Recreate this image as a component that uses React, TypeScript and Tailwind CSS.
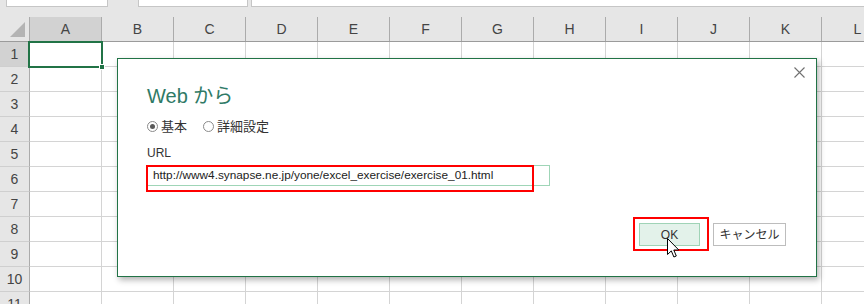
import React from 'react';

const COLS = ['A', 'B', 'C', 'D', 'E', 'F', 'G', 'H', 'I', 'J', 'K', 'L'];
const ROWS = [1, 2, 3, 4, 5, 6, 7, 8, 9, 10, 11];

function Radio({ checked, label }: { checked: boolean; label: string }) {
  return (
    <div className="flex items-center gap-[3px]">
      <span className="w-[11px] h-[11px] rounded-full border border-[#8a8a8a] bg-white flex items-center justify-center">
        {checked && <span className="w-[5px] h-[5px] rounded-full bg-[#5a5a5a]" />}
      </span>
      <span className="text-[13px] leading-none text-[#333]">{label}</span>
    </div>
  );
}

function Cursor() {
  return (
    <svg width="13" height="21" viewBox="0 0 13 21" className="absolute left-[667px] top-[238px]">
      <path
        d="M0.5 0.5 L0.5 16.5 L4.3 12.9 L6.9 19 L9.3 18 L6.8 12 L11.8 12 Z"
        fill="#fff"
        stroke="#000"
        strokeWidth="1"
        strokeLinejoin="miter"
      />
    </svg>
  );
}

function Dialog() {
  return (
    <div className="absolute left-[117px] top-[58px] w-[700px] h-[219px] bg-white border border-[#217346] shadow-[2px_3px_6px_rgba(0,0,0,0.3)]">
      <button className="absolute left-[675px] top-[7px] w-[12px] h-[12px] flex items-center justify-center">
        <svg width="11" height="11" viewBox="0 0 11 11">
          <path d="M0.5 0.5 L10.5 10.5 M10.5 0.5 L0.5 10.5" stroke="#707070" strokeWidth="1.1" />
        </svg>
      </button>

      <div className="pl-[29px] pt-[23px] flex flex-col">
        <h1 className="text-[20px] leading-[28px] text-[#2f7a66]">Web から</h1>

        <div className="mt-[10px] flex items-center gap-[16px]">
          <Radio checked label="基本" />
          <Radio checked={false} label="詳細設定" />
        </div>

        <div className="mt-[13px] text-[12px] leading-[14px] text-[#333]">URL</div>

        <div className="mt-[5px] w-[403px] h-[21px] border border-[#9fd5b7] flex items-center pl-[5px]">
          <span className="text-[11.8px] text-[#222] whitespace-nowrap">
            http://www4.synapse.ne.jp/yone/excel_exercise/exercise_01.html
          </span>
        </div>
      </div>

      <div className="absolute left-[28px] top-[106px] w-[388px] h-[27px] border-2 border-[#ff0000]" />

      <div className="absolute right-[30px] bottom-[30px] flex gap-[13px]">
        <button className="w-[61px] h-[23px] bg-[#e3f2ea] border border-[#9fd3b6] text-[12px] text-[#333] flex items-center justify-center">
          OK
        </button>
        <button className="w-[73px] h-[23px] bg-white border border-[#bdbdbd] text-[12px] text-[#333] flex items-center justify-center">
          キャンセル
        </button>
      </div>

      <div className="absolute left-[515px] top-[158px] w-[76px] h-[34px] border-2 border-[#ff0000]" />
    </div>
  );
}

export default function App() {
  return (
    <div
      className="relative w-[864px] h-[304px] overflow-hidden bg-white"
      style={{ fontFamily: '"Liberation Sans", "Noto Sans CJK JP", sans-serif' }}
    >
      {/* formula bar strip */}
      <div className="h-[17px] bg-[#e6e6e6] flex items-start">
        <div className="ml-[6px] w-[102px] h-[7px] bg-white border-x border-b border-[#c6c6c6]" />
        <div className="ml-[30px] w-[110px] h-[7px] bg-white border-x border-b border-[#c6c6c6]" />
        <div className="ml-[3px] flex-1 h-[7px] bg-white border-l border-b border-[#c6c6c6]" />
      </div>

      {/* column headers */}
      <div className="flex h-[25px] bg-[#e6e6e6] border-b border-[#9b9b9b]">
        <div className="w-[30px] shrink-0 border-r border-[#ababab] relative">
          <svg width="15" height="15" viewBox="0 0 15 15" className="absolute left-[10px] top-[5px]">
            <path d="M15 0 L15 15 L0 15 Z" fill="#b4b4b4" />
          </svg>
        </div>
        {COLS.map((c, i) => (
          <div
            key={c}
            className={
              (i === 0 ? 'w-[72px] bg-[#d2d2d2] ' : 'w-[72px] ') +
              'shrink-0 border-r border-[#ababab] flex items-center justify-center text-[14px] text-[#444]'
            }
          >
            {c}
          </div>
        ))}
      </div>

      {/* rows */}
      {ROWS.map((r) => (
        <div key={r} className="flex h-[25px]">
          <div
            className={
              (r === 1 ? 'bg-[#d2d2d2] ' : 'bg-[#e6e6e6] ') +
              'w-[30px] shrink-0 border-r border-b border-r-[#ababab] border-b-[#cfcfcf] flex items-center justify-center text-[14px] text-[#444]'
            }
          >
            {r}
          </div>
          {COLS.map((c) => (
            <div key={c} className="w-[72px] shrink-0 border-r border-b border-[#d4d4d4]" />
          ))}
        </div>
      ))}

      {/* selected cell A1 */}
      <div className="absolute left-[28px] top-[41px] w-[75px] h-[27px] border-2 border-[#217346]" />
      <div className="absolute left-[99px] top-[64px] w-[6px] h-[6px] bg-[#217346] border border-white" />

      <Dialog />
      <Cursor />
    </div>
  );
}
